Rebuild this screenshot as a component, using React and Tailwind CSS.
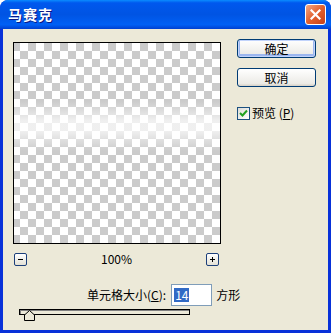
export default function App() {
  const font = { fontFamily: 'Tahoma, "Noto Sans CJK SC", "DejaVu Sans", sans-serif' };
  return (
    <div className="w-[331px] h-[333px] bg-[#0831d9] rounded-t-[8px] flex flex-col overflow-hidden text-[12px] text-black" style={font}>
      {/* title bar */}
      <div className="h-[29px] shrink-0 flex items-center justify-between pl-[8px] pr-[5px] bg-[linear-gradient(#0a8cff_0%,#0058ee_10%,#0054e3_50%,#0060f5_85%,#0040d0_100%)]">
        <span className="text-white font-bold text-[14px] tracking-[1px] [text-shadow:1px_1px_#0a1883]">马赛克</span>
        <div className="w-[21px] h-[21px] rounded-[3px] border border-white bg-[linear-gradient(135deg,#f2a886,#e2602e_50%,#c4401a)] flex items-center justify-center">
          <svg width="11" height="11" viewBox="0 0 11 11">
            <path d="M1.5 1.5 L9.5 9.5 M9.5 1.5 L1.5 9.5" stroke="white" strokeWidth="2.2" strokeLinecap="square" />
          </svg>
        </div>
      </div>
      {/* client */}
      <div className="flex-1 mx-[3px] mb-[3px] bg-[#ece9d8] flex flex-col">
        <div className="flex pt-[13px]">
          <div className="ml-[10px] flex flex-col">
            <div className="w-[208px] h-[202px] border border-black bg-white relative overflow-hidden">
              <div className="absolute inset-0 bg-[image:conic-gradient(#cbcbcb_25%,#ffffff_0_50%,#cbcbcb_0_75%,#ffffff_0)] bg-[length:16px_16px] bg-[position:6px_0px]" />
              <div className="absolute left-0 right-0 top-[58px] h-[50px] bg-[linear-gradient(rgba(255,255,255,0),rgba(255,255,255,0.7)_40%,rgba(255,255,255,0.7)_60%,rgba(255,255,255,0))]" />
            </div>
            <div className="flex items-center justify-between mt-[6px] pl-[1px] pr-[2px]">
              <div className="w-[13px] h-[13px] border border-[#1c3f7a] rounded-[2px] bg-[linear-gradient(#ffffff,#e3e1d6)] flex items-center justify-center">
                <div className="w-[5px] h-[1px] bg-black" />
              </div>
              <span className="text-[12px]">100%</span>
              <div className="w-[13px] h-[13px] border border-[#1c3f7a] rounded-[2px] bg-[linear-gradient(#ffffff,#e3e1d6)] flex items-center justify-center relative">
                <div className="w-[5px] h-[1px] bg-black" />
                <div className="absolute w-[1px] h-[5px] bg-black" />
              </div>
            </div>
          </div>
          <div className="ml-[16px] flex flex-col">
            <button className="w-[79px] h-[19px] mt-[-3px] rounded-[3px] border border-[#003c74] bg-[linear-gradient(#ffffff,#ecebe6_85%,#d6d0c5)] shadow-[inset_0_0_0_1px_#c1d3fb,inset_0_-1px_0_2px_#9db7ef] text-[12px] leading-none">确定</button>
            <button className="w-[79px] h-[19px] mt-[10px] rounded-[3px] border border-[#003c74] bg-[linear-gradient(#ffffff,#ecebe6_85%,#d6d0c5)] text-[12px] leading-none">取消</button>
            <label className="flex items-center mt-[17px] gap-[2px]">
              <span className="w-[13px] h-[13px] border border-[#1c5180] bg-[linear-gradient(135deg,#dcdcd7,#ffffff)] flex items-center justify-center">
                <svg width="9" height="9" viewBox="0 0 9 9">
                  <path d="M1 4 L3.5 6.5 L8 1.5" fill="none" stroke="#21a121" strokeWidth="2" />
                </svg>
              </span>
              <span>预览 (<span className="underline">P</span>)</span>
            </label>
          </div>
        </div>
        <div className="flex items-center mt-[16px] pl-[84px]">
          <span>单元格大小(<span className="underline">C</span>):</span>
          <div className="ml-[5px] w-[41px] h-[22px] border border-[#7f9db9] bg-white flex items-center pl-[2px]">
            <span className="bg-[#316ac5] text-white px-[1px] leading-[14px]">14</span>
          </div>
          <span className="ml-[4px]">方形</span>
        </div>
        <div className="ml-[16px] mt-[3px] relative w-[171px] h-[12px]">
          <div className="absolute top-0 left-0 w-[171px] h-[6px] border border-black bg-[#ece9d8] shadow-[inset_1px_1px_#808080]" />
          <svg className="absolute left-[5px] top-[1px]" width="11" height="11" viewBox="0 0 11 11">
            <path d="M0.5 10.5 L0.5 5 L5.5 0.5 L10.5 5 L10.5 10.5 Z" fill="#ece9d8" stroke="black" />
          </svg>
        </div>
      </div>
    </div>
  );
}
